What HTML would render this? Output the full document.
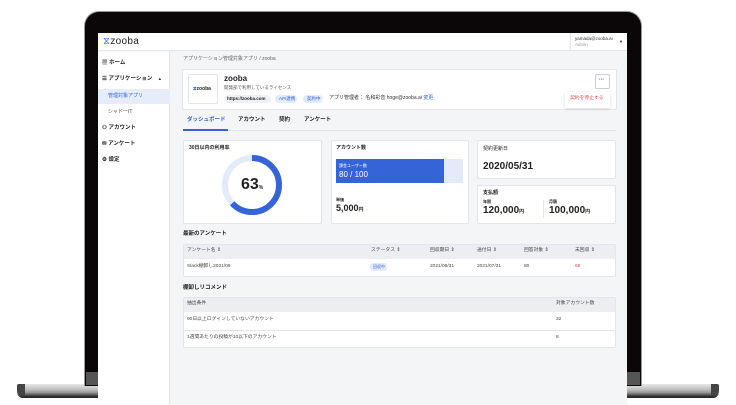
<!DOCTYPE html><html><head><meta charset="utf-8"><style>
*{margin:0;padding:0;box-sizing:border-box}
body{width:736px;height:405px;background:#fff;position:relative;overflow:hidden;font-family:"Liberation Sans","Noto Sans CJK JP",sans-serif;color:#222}
.a{position:absolute}
.t{position:absolute;white-space:nowrap;line-height:1}
.card{position:absolute;background:#fff;border:1px solid #e3e5ea;border-radius:2px}
</style></head><body>
<div class="a" style="left:17px;top:384px;width:702px;height:14px;border-radius:2px 2px 6px 6px;background:linear-gradient(#e8e8e8,#bdbdbd 40%,#9a9a9a 60%,#2a2a2a 90%)"></div>
<div class="a" style="left:17px;top:384px;width:8px;height:12px;background:#444;border-radius:2px 0 0 6px"></div>
<div class="a" style="left:711px;top:384px;width:8px;height:12px;background:#444;border-radius:0 2px 6px 0"></div>
<div class="a" style="left:84px;top:11px;width:558px;height:375px;background:#9a9a9a;border-radius:15px 15px 0 0"></div>
<div class="a" style="left:85px;top:12px;width:556px;height:374px;background:#0b0608;border-radius:14px 14px 0 0"></div>
<div class="a" style="left:86px;top:372px;width:554px;height:13px;background:#555"></div>
<div class="a" style="left:98px;top:33px;width:529px;height:372px;background:#f4f5f7"></div>
<div class="a" style="left:98px;top:33px;width:529px;height:18px;background:#fff;border-bottom:1px solid #e3e5ea"></div>
<div class="t" style="left:103px;top:37px;font-size:10px;color:#222;letter-spacing:.3px"><span style="color:#3464d8">⧖</span>zooba</div>
<div class="a" style="left:570px;top:33px;width:1px;height:18px;background:#e3e5ea"></div>
<div class="t" style="left:575px;top:37px;font-size:4.5px;color:#333">yamada@zooba.ai</div>
<div class="t" style="left:575px;top:43px;font-size:4.5px;color:#999">Admin</div>
<div class="t" style="left:619px;top:40px;font-size:4px">▼</div>
<div class="a" style="left:98px;top:52px;width:72px;height:353px;background:#fff;border-right:1px solid #e3e5ea"></div>
<div class="t" style="left:102px;top:61px;font-size:5.5px;font-weight:bold">▦ ホーム</div>
<div class="t" style="left:102px;top:77px;font-size:5.5px;font-weight:bold">☰ アプリケーション <span style="font-size:4px;margin-left:4px">▲</span></div>
<div class="a" style="left:98px;top:89px;width:72px;height:15px;background:#e6ecf9"></div>
<div class="t" style="left:108px;top:94px;font-size:5px;color:#3464d8">管理対象アプリ</div>
<div class="t" style="left:108px;top:110px;font-size:5px;color:#444">シャドーIT</div>
<div class="t" style="left:102px;top:126px;font-size:5.5px;font-weight:bold">⚇ アカウント</div>
<div class="t" style="left:102px;top:142px;font-size:5.5px;font-weight:bold">✉ アンケート</div>
<div class="t" style="left:102px;top:158px;font-size:5.5px;font-weight:bold">⚙ 設定</div>
<div class="t" style="left:183px;top:57px;font-size:5px;color:#666">アプリケーション管理対象アプリ / zooba</div>
<div class="card" style="left:182px;top:69px;width:435px;height:41px"></div>
<div class="a" style="left:188px;top:74px;width:30px;height:30px;border:1px solid #e3e5ea;border-radius:2px;background:#fff"></div>
<div class="t" style="left:193px;top:87px;font-size:5px;font-weight:bold"><span style="color:#3464d8">⧖</span>zooba</div>
<div class="t" style="left:224px;top:75px;font-size:8px;font-weight:bold">zooba</div>
<div class="t" style="left:224px;top:86px;font-size:4.5px;color:#555">開発部で利用しているライセンス</div>
<div class="a" style="left:224px;top:95px;width:47px;height:8px;background:#eef0f3;border-radius:4px"></div>
<div class="t" style="left:227px;top:97px;font-size:4.5px;font-weight:bold">https://zooba.com</div>
<div class="a" style="left:275px;top:95px;width:22px;height:8px;background:#e3eafa;border-radius:4px"></div>
<div class="t" style="left:279px;top:97px;font-size:4.5px;color:#3464d8">API連携</div>
<div class="a" style="left:303px;top:95px;width:20px;height:8px;background:#e3eafa;border-radius:4px"></div>
<div class="t" style="left:307px;top:97px;font-size:4.5px;color:#3464d8">契約中</div>
<div class="t" style="left:329px;top:96px;font-size:5px;color:#333">アプリ管理者： 名和彩音 hoge@zooba.ai <span style="color:#3464d8">変更</span></div>
<div class="a" style="left:595px;top:74px;width:15px;height:15px;border:1px solid #ccc;border-radius:2px;background:#fff"></div>
<div class="t" style="left:599px;top:78px;font-size:5px;font-weight:bold">···</div>
<div class="a" style="left:565px;top:92px;width:45px;height:16px;background:#fff;box-shadow:0 1px 3px rgba(0,0,0,.15)"></div>
<div class="t" style="left:570px;top:97px;font-size:4.8px;color:#e5484d">契約を停止する</div>
<div class="a" style="left:183px;top:130px;width:433px;height:1px;background:#dde0e5"></div>
<div class="a" style="left:183px;top:129px;width:45px;height:2px;background:#3464d8"></div>
<div class="t" style="left:187px;top:118px;font-size:5.5px;color:#3464d8;font-weight:bold">ダッシュボード</div>
<div class="t" style="left:238px;top:118px;font-size:5.5px;font-weight:bold">アカウント</div>
<div class="t" style="left:279px;top:118px;font-size:5.5px;font-weight:bold">契約</div>
<div class="t" style="left:304px;top:118px;font-size:5.5px;font-weight:bold">アンケート</div>
<div class="card" style="left:183px;top:140px;width:139px;height:84px"></div>
<div class="t" style="left:189px;top:146px;font-size:5px;font-weight:bold">30日以内の利用率</div>
<svg class="a" style="left:220px;top:153px" width="64" height="64"><circle cx="32" cy="32" r="27" fill="none" stroke="#e3eafa" stroke-width="6"/><circle cx="32" cy="32" r="27" fill="none" stroke="#3464d8" stroke-width="6" stroke-dasharray="106.9 200" transform="rotate(-90 32 32)"/></svg>
<div class="t" style="left:241px;top:177px;font-size:16px;font-weight:bold">63<span style="font-size:5px">%</span></div>
<div class="card" style="left:331px;top:140px;width:138px;height:84px"></div>
<div class="t" style="left:336px;top:146px;font-size:5px;font-weight:bold">アカウント数</div>
<div class="a" style="left:336px;top:159px;width:127px;height:24px;background:#e3eafa"></div>
<div class="a" style="left:336px;top:159px;width:108px;height:24px;background:#3464d8"></div>
<div class="t" style="left:339px;top:164px;font-size:4px;color:#fff">課金ユーザー数</div>
<div class="t" style="left:339px;top:171px;font-size:8px;color:#fff">80 / 100</div>
<div class="t" style="left:336px;top:198px;font-size:4px;font-weight:bold">単価</div>
<div class="t" style="left:336px;top:204px;font-size:9px;font-weight:bold">5,000<span style="font-size:5px">円</span></div>
<div class="card" style="left:477px;top:140px;width:139px;height:39px"></div>
<div class="t" style="left:483px;top:147px;font-size:5px">契約更新日</div>
<div class="t" style="left:483px;top:162px;font-size:10px;font-weight:bold">2020/05/31</div>
<div class="card" style="left:477px;top:185px;width:139px;height:39px"></div>
<div class="t" style="left:483px;top:191px;font-size:5px;font-weight:bold">支払額</div>
<div class="t" style="left:483px;top:200px;font-size:4px;font-weight:bold">年間</div>
<div class="t" style="left:483px;top:206px;font-size:10px;font-weight:bold">120,000<span style="font-size:5px">円</span></div>
<div class="a" style="left:543px;top:200px;width:1px;height:18px;background:#e3e5ea"></div>
<div class="t" style="left:549px;top:200px;font-size:4px;font-weight:bold">月額</div>
<div class="t" style="left:549px;top:206px;font-size:10px;font-weight:bold">100,000<span style="font-size:5px">円</span></div>
<div class="t" style="left:183px;top:232px;font-size:5.5px;font-weight:bold">最新のアンケート</div>
<div class="card" style="left:183px;top:244px;width:433px;height:33px"></div>
<div class="a" style="left:184px;top:245px;width:431px;height:14px;background:#eceef2"></div>
<div class="t" style="left:187px;top:249px;font-size:4.8px;color:#444">アンケート名 ⇕</div>
<div class="t" style="left:371px;top:249px;font-size:4.8px;color:#444">ステータス ⇕</div>
<div class="t" style="left:430px;top:249px;font-size:4.8px;color:#444">回収期日 ⇕</div>
<div class="t" style="left:477px;top:249px;font-size:4.8px;color:#444">送付日 ⇕</div>
<div class="t" style="left:524px;top:249px;font-size:4.8px;color:#444">回答対象 ⇕</div>
<div class="t" style="left:575px;top:249px;font-size:4.8px;color:#444">未回収 ⇕</div>
<div class="t" style="left:187px;top:265px;font-size:4.8px;color:#444">Slack棚卸し2021/08</div>
<div class="a" style="left:370px;top:263px;width:17px;height:8px;background:#e3eafa;border-radius:3px"></div>
<div class="t" style="left:373px;top:265px;font-size:4px;color:#3464d8">回収中</div>
<div class="t" style="left:430px;top:265px;font-size:4.8px;color:#444">2021/08/31</div>
<div class="t" style="left:477px;top:265px;font-size:4.8px;color:#444">2021/07/31</div>
<div class="t" style="left:524px;top:265px;font-size:4.8px;color:#444">80</div>
<div class="t" style="left:575px;top:265px;font-size:4.8px;color:#e5484d">68</div>
<div class="t" style="left:183px;top:286px;font-size:5.5px;font-weight:bold">棚卸しリコメンド</div>
<div class="card" style="left:183px;top:297px;width:433px;height:51px"></div>
<div class="a" style="left:184px;top:298px;width:431px;height:14px;background:#eceef2"></div>
<div class="a" style="left:184px;top:330px;width:431px;height:1px;background:#e3e5ea"></div>
<div class="t" style="left:187px;top:302px;font-size:4.8px;color:#444">抽出条件</div>
<div class="t" style="left:556px;top:302px;font-size:4.8px;color:#444">対象アカウント数</div>
<div class="t" style="left:187px;top:318px;font-size:4.8px;color:#444">90日以上ログインしていないアカウント</div>
<div class="t" style="left:556px;top:318px;font-size:4.8px;color:#444">32</div>
<div class="t" style="left:187px;top:336px;font-size:4.8px;color:#444">1週間あたりの投稿が10以下のアカウント</div>
<div class="t" style="left:556px;top:336px;font-size:4.8px;color:#444">8</div>
</body></html>
